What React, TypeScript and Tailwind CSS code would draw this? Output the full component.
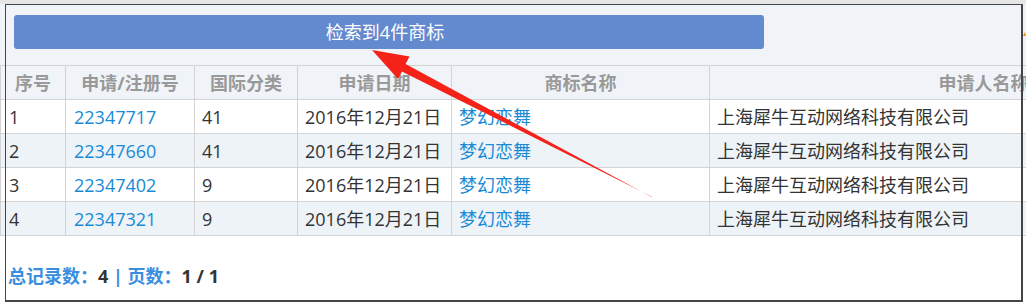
import React from 'react';

interface MarkRow {
  id: number;
  regNo: string;
  classNo: string;
  date: string;
  name: string;
  applicant: string;
}

const rows: MarkRow[] = [
  { id: 1, regNo: '22347717', classNo: '41', date: '2016年12月21日', name: '梦幻恋舞', applicant: '上海犀牛互动网络科技有限公司' },
  { id: 2, regNo: '22347660', classNo: '41', date: '2016年12月21日', name: '梦幻恋舞', applicant: '上海犀牛互动网络科技有限公司' },
  { id: 3, regNo: '22347402', classNo: '9', date: '2016年12月21日', name: '梦幻恋舞', applicant: '上海犀牛互动网络科技有限公司' },
  { id: 4, regNo: '22347321', classNo: '9', date: '2016年12月21日', name: '梦幻恋舞', applicant: '上海犀牛互动网络科技有限公司' },
];

const headers = ['序号', '申请/注册号', '国际分类', '申请日期', '商标名称', '申请人名称'];
const widths = ['w-[65px]', 'w-[129px]', 'w-[103px]', 'w-[154px]', 'w-[258px]', 'w-[548px]'];

export default function App() {
  return (
    <div className="relative w-[1026px] h-[304px] overflow-hidden bg-white font-['Open_Sans','Noto_Sans_CJK_SC',sans-serif]">
      <div className="h-[4px] bg-[#e6e6e6]" />

      {/* search summary */}
      <div className="bg-[#f0f4f8] pt-[11px] pb-[16px] pl-[14px]">
        <div className="w-[750px] h-[34px] rounded-[3px] bg-[#6389cf] flex items-center justify-center text-white text-[18px] pr-[8px]">
          检索到4件商标
        </div>
      </div>

      <table className="table-fixed border-collapse w-[1257px] text-[18px]">
        <colgroup>
          {widths.map((w, i) => (
            <col key={i} className={w} />
          ))}
        </colgroup>
        <thead>
          <tr className="bg-[#f0f4f8]">
            {headers.map((h) => (
              <th
                key={h}
                className="h-[34px] p-0 border border-[#d3d3d3] text-center font-bold text-[#999999] leading-none"
              >
                {h}
              </th>
            ))}
          </tr>
        </thead>
        <tbody>
          {rows.map((r) => (
            <tr key={r.id} className={r.id % 2 === 0 ? 'bg-[#eef3f8]' : 'bg-white'}>
              <td className="h-[34px] py-0 pl-[8px] border border-[#d3d3d3] text-[#333333] leading-none">{r.id}</td>
              <td className="py-0 pl-[8px] border border-[#d3d3d3] text-[#1a8ad6] leading-none">{r.regNo}</td>
              <td className="py-0 pl-[7px] border border-[#d3d3d3] text-[#333333] leading-none">{r.classNo}</td>
              <td className="py-0 pl-[7px] border border-[#d3d3d3] text-[#333333] leading-none whitespace-nowrap">{r.date}</td>
              <td className="py-0 pl-[7px] border border-[#d3d3d3] text-[#1a8ad6] leading-none">{r.name}</td>
              <td className="py-0 pl-[7px] border border-[#d3d3d3] text-[#333333] leading-none">{r.applicant}</td>
            </tr>
          ))}
        </tbody>
      </table>

      <div className="pt-[28px] pl-[8px] text-[18px] font-bold leading-[24px]">
        <span className="text-[#3a8ee0]">总记录数：</span>
        <span className="text-[#333333]">4</span>
        <span className="text-[#3a8ee0]"> | 页数：</span>
        <span className="text-[#333333]">1 / 1</span>
      </div>

      {/* frame drawn over the panel */}
      <div className="pointer-events-none absolute left-[5px] top-[4px] w-[1018px] h-[298px] border-t border-l border-r-2 border-b-2 border-[#454545]" />

      {/* red annotation arrow */}
      <svg className="pointer-events-none absolute left-0 top-0" width="1026" height="304">
        <polygon
          points="372,50 409.5,56.5 405.6,64 652.6,197.6 651.4,196.4 401.9,71.5 398,79"
          fill="#f5221a"
        />
        <path d="M1023 36 l2 -4 l1 4 z" fill="#f08a1c" />
      </svg>
    </div>
  );
}
